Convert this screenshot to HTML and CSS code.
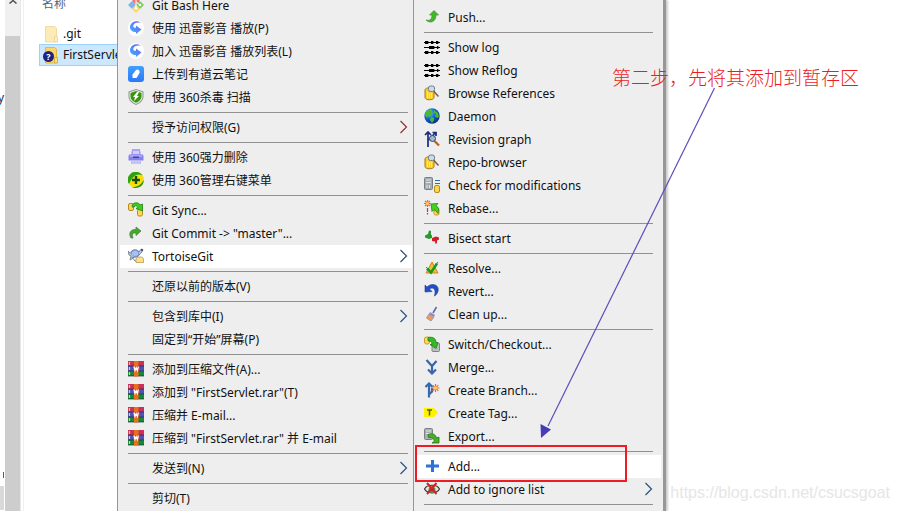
FILE: index.html
```html
<!DOCTYPE html>
<html lang="zh-CN">
<head>
    <meta charset="UTF-8">
    <meta name="viewport" content="width=device-width, initial-scale=1.0">
    <title>TortoiseGit</title>
    <link rel="stylesheet" href="styles.css">
</head>
<body>

    <!-- Icon definitions -->
    <svg class="defs" width="0" height="0" aria-hidden="true">
        <defs>
            <linearGradient id="swirlFill" x1="0" y1="1" x2="1" y2="0">
                <stop offset="0" stop-color="#35b5ff"/>
                <stop offset="1" stop-color="#7a5cf0"/>
            </linearGradient>
            <linearGradient id="blueFill" x1="0" y1="0" x2="0" y2="1">
                <stop offset="0" stop-color="#3fa0ff"/>
                <stop offset="1" stop-color="#2c78f5"/>
            </linearGradient>
            <radialGradient id="globeFill" cx="0.35" cy="0.3" r="0.75">
                <stop offset="0" stop-color="#5cc8ff"/>
                <stop offset="0.5" stop-color="#1464d2"/>
                <stop offset="1" stop-color="#062a80"/>
            </radialGradient>
        </defs>
        <symbol id="git" viewBox="0 0 16 16">
            <path d="M8 0l4 4-4 4-4-4z" fill="#f27268"/>
            <path d="M4 4l4 4-4 4-4-4z" fill="#7db4f2"/>
            <path d="M12 4l4 4-4 4-4-4z" fill="#76cd5c"/>
            <path d="M8 8l4 4-4 4-4-4z" fill="#fbd66b"/>
            <path d="M8 3v9M8 5l4 3" stroke="#fff" stroke-width="1" fill="none"/>
            <circle cx="8" cy="11.500" r="1.300" fill="#fff"/>
            <circle cx="12" cy="8" r="1.300" fill="#fff"/>
        </symbol>
        <symbol id="swirl" viewBox="0 0 16 16">
            <circle cx="8" cy="8" r="8" fill="#fff"/>
            <path d="M13 3C10 0 3 1 2 6.500 1.500 10 4.500 12 8 12v2l5.500-4.500L8 5.500v2.300C6 8 4.500 7 5.500 5 7 2.500 10 2 13 3z" fill="url(#swirlFill)"/>
        </symbol>
        <symbol id="note" viewBox="0 0 16 16">
            <rect width="16" height="16" rx="3" fill="url(#blueFill)"/>
            <path d="M4.500 12V8.500L8 4c1.500-1.500 4.500.5 3.500 3L8.500 12z" fill="#fff"/>
        </symbol>
        <symbol id="shield" viewBox="0 0 16 16">
            <path d="M8 0l7.500 2.500v5C15.500 11.500 12 14.500 8 16 4 14.500.5 11.500.5 7.500v-5z" fill="#8d9490"/>
            <path d="M8 1l6.500 2.200v4.300c0 3.500-3 6-6.500 7.400C4.500 13.500 1.500 11 1.500 7.500V3.200z" fill="#e4ece0"/>
            <path d="M8 2l5.500 2v3.500c0 3-2.500 5-5.500 6.300-3-1.300-5.500-3.300-5.500-6.300V4z" fill="#369708"/>
            <path d="M9 3L5 8h2l-1 4 5-5H9l2-4z" fill="#fff"/>
        </symbol>
        <symbol id="shredder" viewBox="0 0 16 16">
            <path d="M4 0h8l1 6H3z" fill="#aaa4f3"/>
            <path d="M5 2h6v3H5z" fill="#d0cdff"/>
            <path d="M1 5.500h14l.5 2v4H.5v-4z" fill="#8582ee"/>
            <path d="M2 6h12v2H2z" fill="#aaa5f5"/>
            <path d="M5 7.500h6V9H5z" fill="#3e3fb5"/>
            <path d="M3 11h10v4H3z" fill="#bbb9f5"/>
            <path d="M5 12v3M8 12v3M11 12v3" stroke="#dddcff" stroke-width=".8"/>
        </symbol>
        <symbol id="plus360" viewBox="0 0 16 16">
            <circle cx="8" cy="8" r="8" fill="#f4e010"/>
            <path d="M1 12A8 8 0 0 1 12 1C13 1.500 14 2.500 14.500 3.500 10 1 5 3 1 12z" fill="#29a414"/>
            <path d="M15.800 8A8 8 0 0 1 4 15c5 .5 9-2 11.800-7z" fill="#258d12"/>
            <path d="M8 4v8M4 8h8" stroke="#174f08" stroke-width="2.400"/>
        </symbol>
        <symbol id="sync" viewBox="0 0 16 16">
            <rect x=".5" y="1.500" width="5" height="7" rx="1.500" fill="#fbd75c" stroke="#b58a20"/>
            <rect x="9.500" y="7" width="5" height="7" rx="1.500" fill="#fbd75c" stroke="#b58a20"/>
            <path d="M4 5C4-.5 11 0 12 3l2.500-1v7L8 6.500l2-1C8.500 3 6.500 3.500 6.500 5z" fill="#39cf22" stroke="#257e17" stroke-width=".8"/>
        </symbol>
        <symbol id="commit" viewBox="0 0 16 16">
            <path d="M3 13C0 8 3 4 8 4.500V2l5 4-5 4.500V8C5 7.500 3.500 9 5 13z" fill="#3eae25" stroke="#557a50" stroke-width=".8"/>
        </symbol>
        <symbol id="tortoise" viewBox="0 0 16 16">
            <ellipse cx="7" cy="5.500" rx="4.500" ry="3.800" fill="#7e9cdc" stroke="#5a6a99" stroke-width=".7"/>
            <path d="M4 4l3-1.500L10 4v3L7 8 4 7z" fill="#a9c1ef"/>
            <path d="M2 5L0 3l1 4 2 1-1 4 2-1 2-2M11 4l2-3 2 .5-1 2.500-3 3" fill="#b6c4d8" stroke="#5b6d80" stroke-width=".7"/>
            <circle cx="14" cy="2" r="1" fill="#1c4c6e"/>
            <path d="M4 9l3 4h3" stroke="#69809d" fill="none"/>
            <path d="M8 10.500l2-1.500h4l1.500 1.500v4H8z" fill="#fbdf8a" stroke="#b19044" stroke-width=".7"/>
        </symbol>
        <symbol id="rar" viewBox="0 0 16 16">
            <path d="M0 0h16v5H0z" fill="#c9305a"/>
            <path d="M0 5h16v5H0z" fill="#4f50ba"/>
            <path d="M0 10h16v5H0z" fill="#128a3a"/>
            <path d="M0 5h16M0 10h16M0 15h16" stroke="#222a40" stroke-width=".7"/>
            <path d="M6 0h4.500v15.500H6z" fill="#e8701a"/>
            <path d="M5 5h6.500v4.500H5z" fill="#d8442b"/>
            <path d="M6 5.500l1 4 1.200-3 1.200 3 1-4" fill="none" stroke="#fff" stroke-width="1.200"/>
            <path d="M1.500 1v3M1.500 6v3M1.500 11v3" stroke="#f8d32b" stroke-width="1.200"/>
        </symbol>
        <symbol id="push" viewBox="0 0 16 16">
            <path d="M2 11c3 1 6 0 6-5H5.500L10 1.500 14.500 6H12c0 7-6 9-10 5z" fill="#3dba22" stroke="#648a55" stroke-width=".8"/>
        </symbol>
        <symbol id="log" viewBox="0 0 16 16">
            <path d="M0 3.500h16M0 8.500h16M0 13.500h16" stroke="#000" stroke-width="1"/>
            <path d="M1 2h3l1 1.500L4 5H1zM7 2h2l1 1.500L9 5H7zM12 2h2l1 1.500L14 5h-2zM5 7h5l1 1.500-1 1.500H5zM13 7h1l1 1.500-1 1.500h-1zM1 12h3l1 1.500L4 15H1zM7 12h2l1 1.500L9 15H7zM12 12h2l1 1.500-1 1.500h-2z" fill="#000"/>
        </symbol>
        <symbol id="browse" viewBox="0 0 16 16">
            <path d="M1 5c0-3 9-3 9 0v7.500c0 3-9 3-9 0z" fill="#fbce29" stroke="#9c7922"/>
            <path d="M3.500 7v6M5.500 8v5M7.500 8v5" stroke="#ffe985"/>
            <path d="M9.500 6l5 5.500" stroke="#805b3b" stroke-width="1.500"/>
            <rect x="4.500" y="1" width="6" height="5.500" rx="2" fill="#c9dcec" stroke="#6e7d8d"/>
        </symbol>
        <symbol id="globe" viewBox="0 0 16 16">
            <circle cx="8" cy="8" r="7.700" fill="url(#globeFill)"/>
            <path d="M2 4l4-3 2 1-1 2 2 1-3 4-2-1-1 2-2-3zM10 2l4 3 1 4-2 1-2-2 1-2-2-1zM7 9l3 1v2l-2 3-2-3z" fill="#4abb30"/>
        </symbol>
        <symbol id="graph" viewBox="0 0 16 16">
            <path d="M4 16V2M1 4l3-3 3 3M5 9L11 2M8.500 1.500H12V5" fill="none" stroke="#172a80" stroke-width="1.700"/>
            <path d="M10.500 10l4.500 4.500" stroke="#b36227" stroke-width="2.200"/>
            <circle cx="8.500" cy="7.500" r="3" fill="#9eb9d2" stroke="#39445d"/>
        </symbol>
        <symbol id="check" viewBox="0 0 16 16">
            <rect x=".5" y=".5" width="8" height="12" rx="1" fill="#a6adb2" stroke="#788086"/>
            <path d="M2 3h5M2 5.500h5M3 8v3M5.500 8v3" stroke="#dfe3e5"/>
            <path d="M11 3.500h5M11 6.500h5" stroke="#2374a8"/>
            <rect x="10.500" y="8.500" width="5" height="7" rx="1.500" fill="#fbd84b" stroke="#b48b27"/>
        </symbol>
        <symbol id="rebase" viewBox="0 0 16 16">
            <path d="M3.500 0v7M0 3.500h7M1 1l5 5M6 1L1 6" stroke="#ff602b" stroke-width="1.200"/>
            <circle cx="3.500" cy="3.500" r="1.500" fill="#ffe060"/>
            <path d="M3.500 8v4M3.500 13v1.500" stroke="#e52b1b" stroke-width="1.200"/>
            <rect x="10" y="8" width="5" height="7" rx="1.500" fill="#fbd75c" stroke="#c89930"/>
            <path d="M7 4l7-.5-2 2c3 2 3 5 2 8-1-2-3-3-4-4l-2 2z" fill="#42d221" stroke="#287f15" stroke-width=".8"/>
        </symbol>
        <symbol id="bisect" viewBox="0 0 16 16">
            <path d="M1 5.500L4 4l1-3.500 2 .5v3.500l1 1V8L5 9 1 7.500z" fill="#249b30"/>
            <path d="M15 7.500L12 6.500 8 8v3l3 .5.5 2.500 1.500-1v-2.500l2-1z" fill="#d01d28"/>
        </symbol>
        <symbol id="resolve" viewBox="0 0 16 16">
            <path d="M8 2l6 11H2z" fill="#f0bd37" stroke="#cf861f"/>
            <path d="M2 7l5 5 7-10" fill="none" stroke="#e53e21" stroke-width="1"/>
            <path d="M3 8.500l4 4 6-9" fill="none" stroke="#179b1b" stroke-width="2.500"/>
        </symbol>
        <symbol id="revert" viewBox="0 0 16 16">
            <path d="M1 2v7l7-.5L5.500 6C9 3.500 12.500 6 10.500 13c5-3 5.500-11-1.500-11.500C6 1.500 4 3 3 4z" fill="#2250c4" stroke="#1b3a9c" stroke-width=".6"/>
        </symbol>
        <symbol id="clean" viewBox="0 0 16 16">
            <path d="M12.500 1L9 7" stroke="#6568a3" stroke-width="1.600"/>
            <path d="M6 6l5 3-1 2-5-3z" fill="#8490d5"/>
            <path d="M5 8l5 3-3 4L2.500 12z" fill="#ed9b58" stroke="#9289bb" stroke-width=".8"/>
        </symbol>
        <symbol id="switch" viewBox="0 0 16 16">
            <rect x="8" y="7" width="7.500" height="8.500" rx="1" fill="#bac0c0" stroke="#7c8484"/>
            <rect x=".5" y="1" width="5" height="7" rx="2" fill="#fbdc55" stroke="#c69d28"/>
            <path d="M4 1.500c5-1 8 1 8 5h2l-2 6-6-4h2C8 5.500 6.500 4.500 4 5z" fill="#35bb22" stroke="#24781b" stroke-width=".8"/>
        </symbol>
        <symbol id="merge" viewBox="0 0 16 16">
            <path d="M2.500 1L8 7l4.500-5M8 6v9M4 10.500l4 4 4-4" fill="none" stroke="#3867a9" stroke-width="2.200"/>
        </symbol>
        <symbol id="branch" viewBox="0 0 16 16">
            <path d="M5 15.500V2M1.500 5L5 1.500 8.500 5M5 12.500l3-3V6" fill="none" stroke="#3669ad" stroke-width="2.200"/>
            <path d="M11.500 2v8M7.500 6h8M8.700 3.200l5.600 5.600M14.300 3.200L8.700 8.800" stroke="#f36330" stroke-width="1.200"/>
            <circle cx="11.500" cy="6" r="1.700" fill="#ffd060"/>
        </symbol>
        <symbol id="tag" viewBox="0 0 16 16">
            <path d="M0 3h10l4 4.500-4 4.500H0z" fill="#fff200"/>
            <path d="M3 5h5M5.500 5v5.500" stroke="#55600a" stroke-width="1.500"/>
        </symbol>
        <symbol id="export" viewBox="0 0 16 16">
            <rect x=".5" y=".5" width="8" height="11" rx="1" fill="#aab0b1" stroke="#7b8384"/>
            <path d="M2 3h5M2 5.500h5" stroke="#dfe3e4"/>
            <path d="M4 6.500c5-2 8 .5 8.500 3.500l2.500-1v6H8l2.500-2C9.500 10.500 8 9 4.500 9.500z" fill="#48af27" stroke="#2b731a" stroke-width=".8"/>
        </symbol>
        <symbol id="add" viewBox="0 0 16 16">
            <path d="M8.500 2v12M2 8h13" stroke="#2c72d9" stroke-width="3"/>
        </symbol>
        <symbol id="ignore" viewBox="0 0 16 16">
            <path d="M.5 8C3 3 13 3 15.500 8 13 13 3 13 .5 8z" fill="#e5e6e4" stroke="#303030" stroke-width="1.200"/>
            <circle cx="8" cy="9" r="3.500" fill="#458f61"/>
            <circle cx="8" cy="8" r="1.500" fill="#151515"/>
            <path d="M3 2l9.500 11M12.500 2L3 13" stroke="#d6221d" stroke-width="2"/>
        </symbol>
        <symbol id="arrow" viewBox="0 0 8 14">
            <path d="M.5 1l6 6-6 6" fill="none" stroke="currentColor" stroke-width="1.200"/>
        </symbol>
        <symbol id="folder" viewBox="0 0 14 17">
            <path d="M.5.500h9l2 1.500v14H.5z" fill="#fbe398" stroke="#ecd07c"/>
            <path d="M9.500 10.500h3v5.500h-3z" fill="#fceaaf" stroke="#e8c870"/>
        </symbol>
    </svg>

    <div class="desktop">
        <!-- Explorer window -->
        <div class="tree">
            <span class="tree-text">y</span>
            <span class="tree-mark"></span>
            <span class="tree-selected"></span>
        </div>
        <div class="scrollbar">
            <svg class="scroll-up" viewBox="0 0 8 4"><path d="M.5 3.500L4 .5l3.500 3" fill="none" stroke="#505050" stroke-width="1.500"/></svg>
            <div class="thumb"></div>
        </div>
        <div class="files">
            <div class="column-name">名称</div>
            <a href="#" class="file hidden-file"><svg class="folder-icon"><use href="#folder"/></svg>.git</a>
            <a href="#" class="file selected">
                <svg class="folder-icon" viewBox="0 0 14 17">
                    <path d="M.5.500h9l2 1.500v14H.5z" fill="#fbd667" stroke="#e4b744"/>
                    <path d="M9.500 10.500h3v5.500h-3z" fill="#fce08a" stroke="#dcae3c"/>
                </svg>
                <span class="badge">?</span>FirstServlet
            </a>
        </div>

        <!-- Explorer context menu -->
        <div class="menu menu-main" role="menu">
            <button class="item"><svg class="icon"><use href="#git"/></svg>Git Bash Here</button>
            <button class="item"><svg class="icon"><use href="#swirl"/></svg>使用 迅雷影音 播放(P)</button>
            <button class="item"><svg class="icon"><use href="#swirl"/></svg>加入 迅雷影音 播放列表(L)</button>
            <button class="item"><svg class="icon"><use href="#note"/></svg>上传到有道云笔记</button>
            <button class="item"><svg class="icon"><use href="#shield"/></svg>使用 360杀毒 扫描</button>
            <hr>
            <button class="item"><span class="icon"></span>授予访问权限(G)<svg class="arrow arrow-red"><use href="#arrow"/></svg></button>
            <hr>
            <button class="item"><svg class="icon"><use href="#shredder"/></svg>使用 360强力删除</button>
            <button class="item"><svg class="icon"><use href="#plus360"/></svg>使用 360管理右键菜单</button>
            <hr>
            <button class="item"><svg class="icon"><use href="#sync"/></svg>Git Sync...</button>
            <button class="item"><svg class="icon"><use href="#commit"/></svg>Git Commit -&gt; "master"...</button>
            <button class="item active"><svg class="icon"><use href="#tortoise"/></svg>TortoiseGit<svg class="arrow"><use href="#arrow"/></svg></button>
            <hr>
            <button class="item"><span class="icon"></span>还原以前的版本(V)</button>
            <hr>
            <button class="item"><span class="icon"></span>包含到库中(I)<svg class="arrow"><use href="#arrow"/></svg></button>
            <button class="item"><span class="icon"></span>固定到“开始”屏幕(P)</button>
            <hr>
            <button class="item"><svg class="icon"><use href="#rar"/></svg>添加到压缩文件(A)...</button>
            <button class="item"><svg class="icon"><use href="#rar"/></svg>添加到 "FirstServlet.rar"(T)</button>
            <button class="item"><svg class="icon"><use href="#rar"/></svg>压缩并 E-mail...</button>
            <button class="item"><svg class="icon"><use href="#rar"/></svg>压缩到 "FirstServlet.rar" 并 E-mail</button>
            <hr>
            <button class="item"><span class="icon"></span>发送到(N)<svg class="arrow"><use href="#arrow"/></svg></button>
            <hr>
            <button class="item"><span class="icon"></span>剪切(T)</button>
        </div>

        <!-- TortoiseGit submenu -->
        <div class="menu menu-sub" role="menu">
            <button class="item"><svg class="icon"><use href="#push"/></svg>Push...</button>
            <hr>
            <button class="item"><svg class="icon"><use href="#log"/></svg>Show log</button>
            <button class="item"><svg class="icon"><use href="#log"/></svg>Show Reflog</button>
            <button class="item"><svg class="icon"><use href="#browse"/></svg>Browse References</button>
            <button class="item"><svg class="icon"><use href="#globe"/></svg>Daemon</button>
            <button class="item"><svg class="icon"><use href="#graph"/></svg>Revision graph</button>
            <button class="item"><svg class="icon"><use href="#browse"/></svg>Repo-browser</button>
            <button class="item"><svg class="icon"><use href="#check"/></svg>Check for modifications</button>
            <button class="item"><svg class="icon"><use href="#rebase"/></svg>Rebase...</button>
            <hr>
            <button class="item"><svg class="icon"><use href="#bisect"/></svg>Bisect start</button>
            <hr>
            <button class="item"><svg class="icon"><use href="#resolve"/></svg>Resolve...</button>
            <button class="item"><svg class="icon"><use href="#revert"/></svg>Revert...</button>
            <button class="item"><svg class="icon"><use href="#clean"/></svg>Clean up...</button>
            <hr>
            <button class="item"><svg class="icon"><use href="#switch"/></svg>Switch/Checkout...</button>
            <button class="item"><svg class="icon"><use href="#merge"/></svg>Merge...</button>
            <button class="item"><svg class="icon"><use href="#branch"/></svg>Create Branch...</button>
            <button class="item"><svg class="icon"><use href="#tag"/></svg>Create Tag...</button>
            <button class="item"><svg class="icon"><use href="#export"/></svg>Export...</button>
            <hr>
            <button class="item active"><svg class="icon"><use href="#add"/></svg>Add...</button>
            <button class="item"><svg class="icon"><use href="#ignore"/></svg>Add to ignore list<svg class="arrow"><use href="#arrow"/></svg></button>
            <hr>
        </div>
    </div>

    <!-- Notes drawn over the menus -->
    <div class="note">第二步，先将其添加到暂存区</div>
    <svg class="note-arrow" width="180" height="354" viewBox="0 0 180 354">
        <path d="M174.500 1L8 339" stroke="#5a50b8" stroke-width="1.200" fill="none"/>
        <path d="M.5 337l10.500 5.500L1 351z" fill="#463db4"/>
    </svg>
    <div class="note-box"></div>
    <div class="watermark">https://blog.csdn.net/csucsgoat</div>

</body>
</html>
```
FILE: styles.css
```css
body {
    margin: 0;
    height: 100vh;
    overflow: hidden;
    position: relative;
    background-color: #fff;
    color: #111;
    font-family: "Noto Sans", "Noto Sans CJK SC", sans-serif;
    font-size: 12px;
}

.defs {
    position: absolute;
}

.desktop {
    display: flex;
    height: 100%;
}

/* Explorer window */
.tree {
    width: 5px;
    display: flex;
    flex-direction: column;
    overflow: hidden;
}

.tree-text {
    height: 16px;
    margin-top: 90px;
    margin-left: -2px;
    line-height: 16px;
    color: #1a2c66;
}

.tree-mark {
    width: 1px;
    height: 6px;
    margin: 366px 0 8px 3px;
    background-color: #9a4a08;
}

.tree-selected {
    width: 4px;
    height: 24px;
    background-color: #d9d9d9;
}

.scrollbar {
    width: 15px;
    display: flex;
    flex-direction: column;
    background-color: #f0f0f0;
    border-right: 1px solid #e8e8e8;
}

.scroll-up {
    width: 8px;
    height: 4px;
    margin: 0 4px 32px;
}

.thumb {
    flex: 1;
    background-color: #cdcdcd;
}

.files {
    width: 78px;
    margin-left: 2px;
    padding-left: 15px;
    border-left: 1px solid #f0f0f0;
    overflow: hidden;
}

.column-name {
    height: 28px;
    margin-top: -5px;
    line-height: 18px;
    padding-left: 3px;
    color: #53637c;
}

.file {
    display: flex;
    align-items: center;
    height: 20px;
    margin-bottom: -1px;
    padding-left: 5px;
    border: 1px solid transparent;
    color: #111;
    line-height: 18px;
    text-decoration: none;
    white-space: nowrap;
    position: relative;
}

.file.selected {
    margin-right: -4px;
    background-color: #cce8ff;
    border-color: #99d1ff;
}

.folder-icon {
    flex: none;
    width: 14px;
    height: 17px;
    margin-right: 4px;
}

.hidden-file .folder-icon {
    opacity: 0.7;
}

.badge {
    position: absolute;
    left: 3px;
    top: 6px;
    width: 11px;
    height: 11px;
    border-radius: 50%;
    background-color: #1d2280;
    color: #fff;
    font-size: 9px;
    font-weight: bold;
    line-height: 11px;
    text-align: center;
}

/* Context menus */
.menu {
    flex: none;
    box-sizing: border-box;
    background-color: #eee;
    border-left: 1px solid #979797;
}

.menu-main {
    width: 296px;
    margin-top: -6px;
    padding: 0 1px 0 2px;
}

.menu-sub {
    width: 253px;
    padding: 6px 2px 0 3px;
    border-right: 3px solid #979797;
    box-shadow: 2px 0 2px #ccc;
}

.item {
    display: flex;
    align-items: center;
    width: 100%;
    height: 23px;
    padding: 0 4px 0 8px;
    border: none;
    background: none;
    color: #111;
    font: inherit;
    line-height: 16px;
    text-align: left;
    white-space: nowrap;
}

.menu-sub .item {
    padding: 0 8px 0 7px;
}

.item.active,
.item:hover {
    background-color: #fff;
}

.icon {
    flex: none;
    width: 16px;
    height: 16px;
    margin: 0 8px 1px 0;
}

.arrow {
    width: 8px;
    height: 14px;
    margin: 0 0 1px auto;
    color: #28527c;
}

.arrow-red {
    color: #96302a;
}

.menu hr {
    height: 1px;
    margin: 3px 4px 3px 8px;
    border: none;
    background-color: #919191;
}

.menu-sub hr {
    margin: 3px 8px 3px 7px;
}

/* Notes */
.note {
    position: absolute;
    left: 612px;
    top: 63px;
    color: #ed1c24;
    font-family: "Noto Sans CJK SC", sans-serif;
    font-size: 19px;
    font-weight: 300;
    line-height: 28px;
}

.note-arrow {
    position: absolute;
    left: 540px;
    top: 87px;
}

.note-box {
    position: absolute;
    left: 415px;
    top: 445px;
    width: 208px;
    height: 33px;
    border: 2px solid #ed1c24;
}

.watermark {
    position: absolute;
    right: 9px;
    bottom: 8px;
    color: #e6e6e6;
    font-family: "Liberation Sans", Arial, sans-serif;
    font-size: 16px;
    line-height: 20px;
}
```
